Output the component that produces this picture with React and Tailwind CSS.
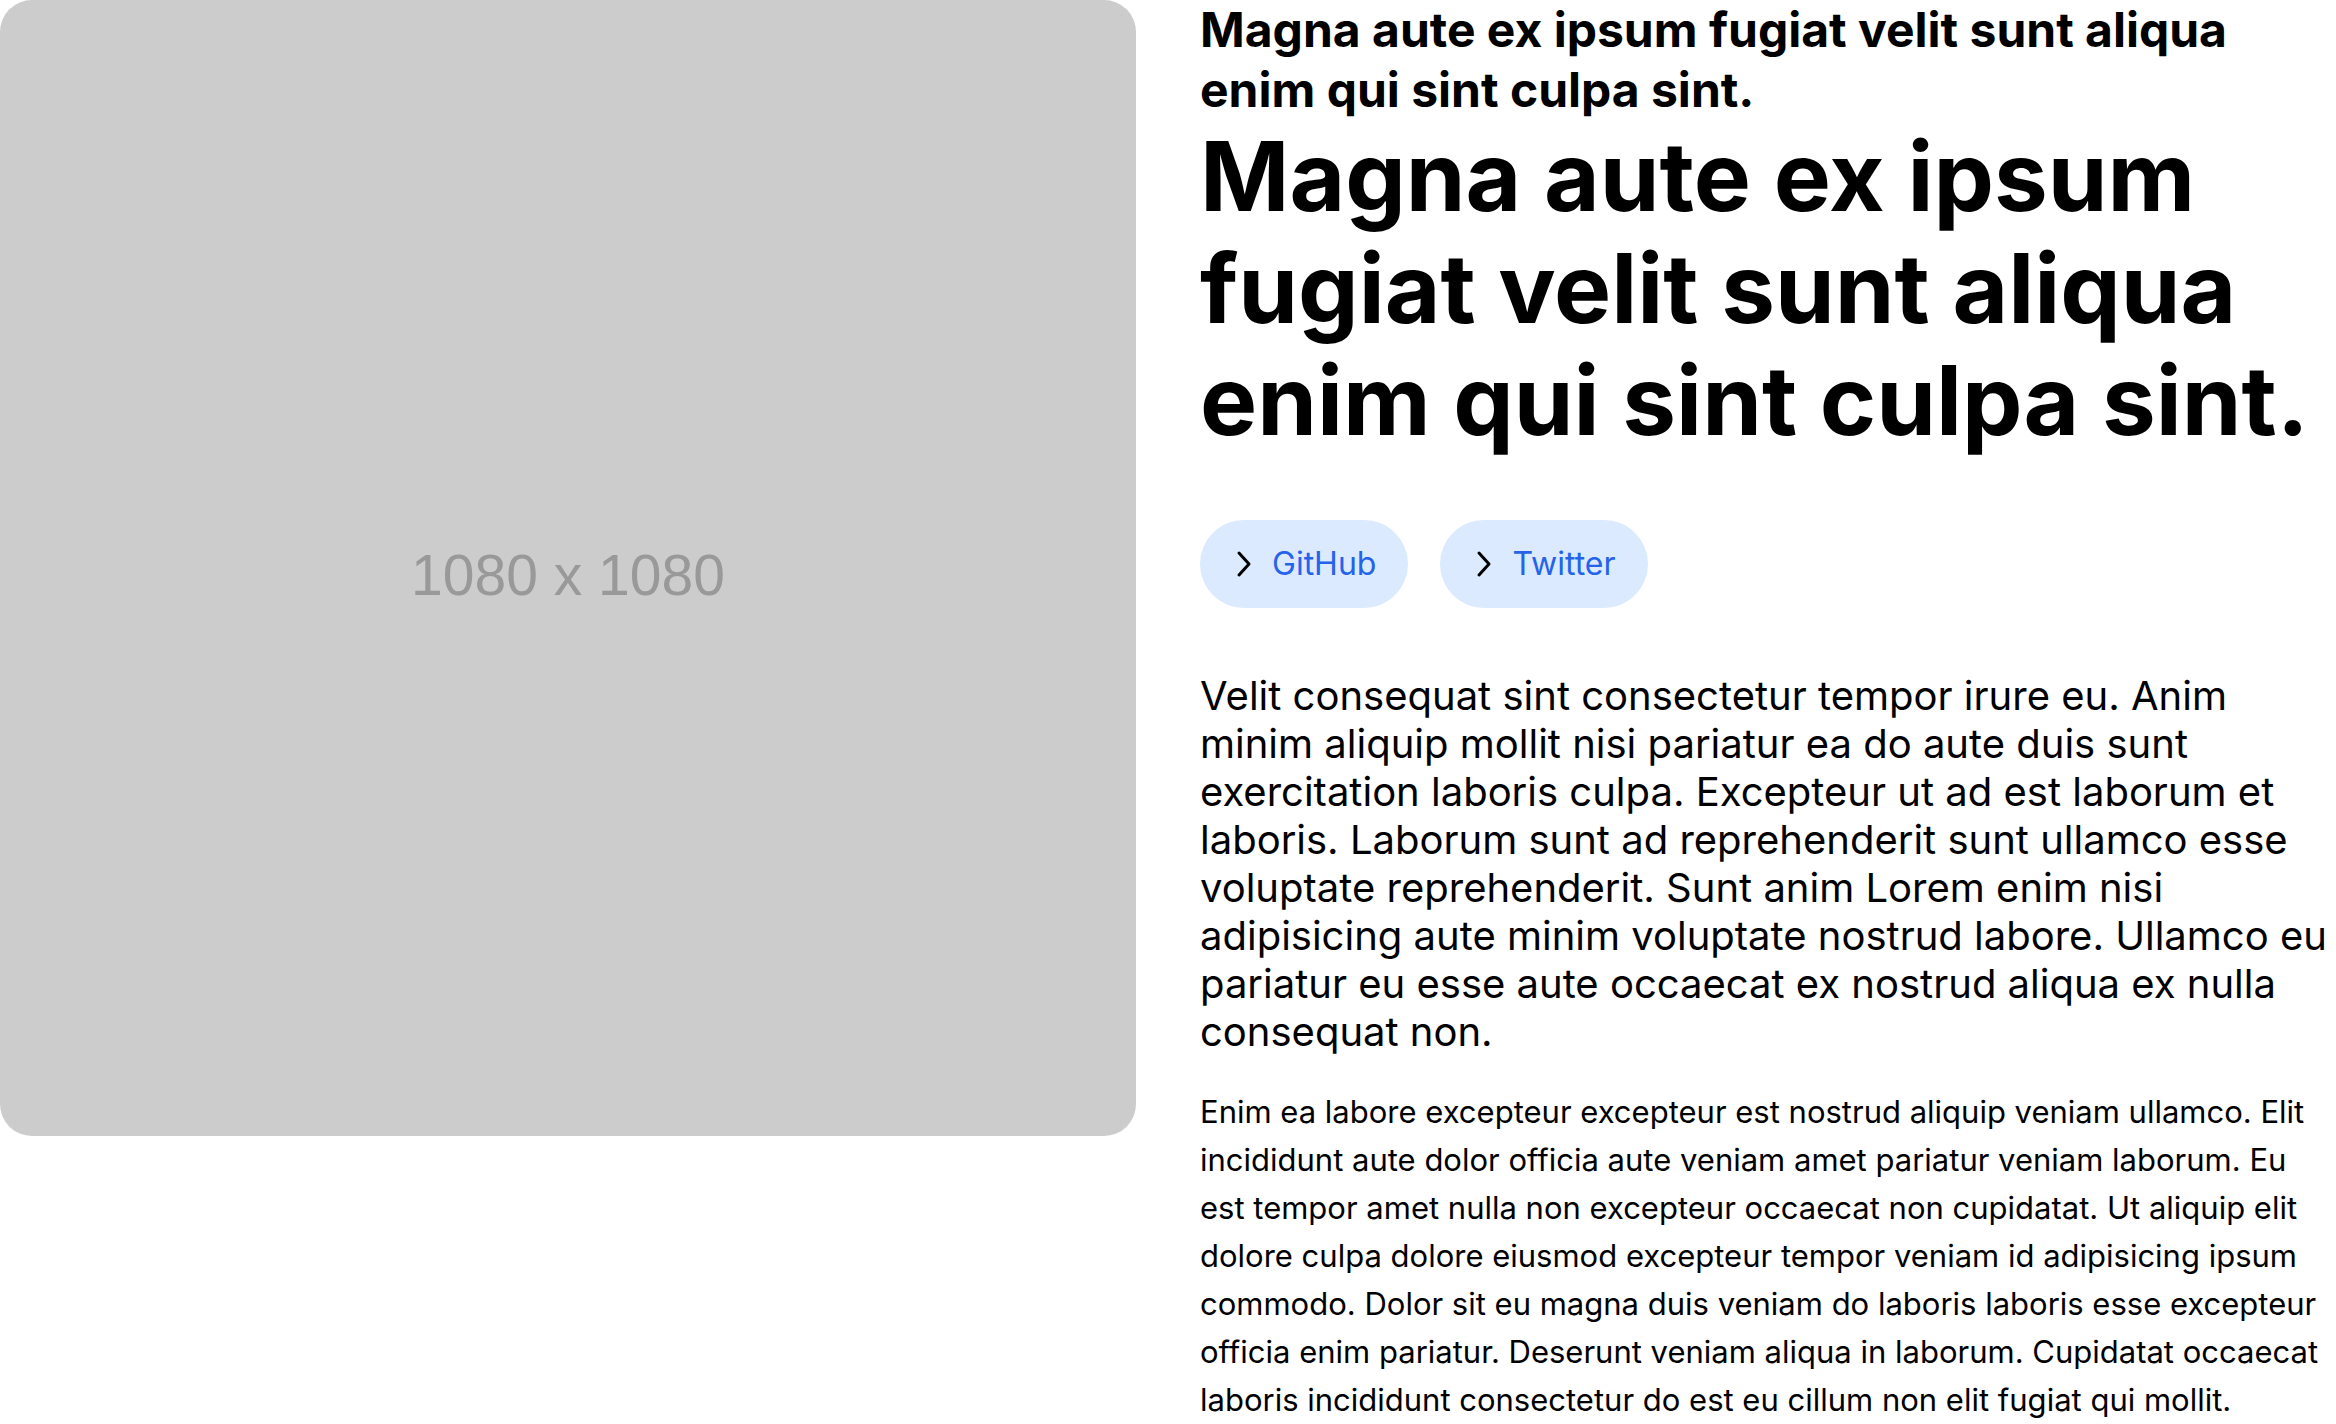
import React from 'react';

const LINKS = ['GitHub', 'Twitter'];

function Chevron() {
  return (
    <svg width="24" height="32" viewBox="0 0 24 32" fill="none" stroke="#000" strokeWidth="3" strokeLinecap="round" strokeLinejoin="round">
      <path d="M7 5 L17 16 L7 27" />
    </svg>
  );
}

export default function App() {
  return (
    <div className="grid grid-cols-2 gap-16 bg-white text-black font-['Inter',sans-serif]">
      {/* placeholder picture */}
      <div className="aspect-square w-full rounded-[32px] bg-[#cccccc] flex items-center justify-center">
        <span className="mt-[15px] font-['Liberation_Sans',Arial,sans-serif] text-[57px] text-[#999999]">1080 x 1080</span>
      </div>

      <div className="flex flex-col">
        <h2 className="text-5xl leading-tight font-bold">
          Magna aute ex ipsum fugiat velit sunt aliqua enim qui sint culpa sint.
        </h2>
        <h1 className="text-[96px] leading-[112px] font-bold">
          Magna aute ex ipsum fugiat velit sunt aliqua enim qui sint culpa sint.
        </h1>

        <div className="flex gap-8 mt-16">
          {LINKS.map((name) => (
            <a key={name} href="#" className="flex items-center gap-4 h-[88px] pl-8 pr-8 rounded-full bg-[#dbeafe] text-[32px] text-[#2563eb]">
              <Chevron />
              <span>{name}</span>
            </a>
          ))}
        </div>

        <p className="mt-16 text-[40px] leading-[48px]">
          Velit consequat sint consectetur tempor irure eu. Anim minim aliquip mollit nisi pariatur ea do aute duis sunt exercitation laboris culpa. Excepteur ut ad est laborum et laboris. Laborum sunt ad reprehenderit sunt ullamco esse voluptate reprehenderit. Sunt anim Lorem enim nisi adipisicing aute minim voluptate nostrud labore. Ullamco eu pariatur eu esse aute occaecat ex nostrud aliqua ex nulla consequat non.
        </p>
        <p className="mt-8 text-[31px] leading-[48px]">
          Enim ea labore excepteur excepteur est nostrud aliquip veniam ullamco. Elit incididunt aute dolor officia aute veniam amet pariatur veniam laborum. Eu est tempor amet nulla non excepteur occaecat non cupidatat. Ut aliquip elit dolore culpa dolore eiusmod excepteur tempor veniam id adipisicing ipsum commodo. Dolor sit eu magna duis veniam do laboris laboris esse excepteur officia enim pariatur. Deserunt veniam aliqua in laborum. Cupidatat occaecat laboris incididunt consectetur do est eu cillum non elit fugiat qui mollit.
        </p>
      </div>
    </div>
  );
}
